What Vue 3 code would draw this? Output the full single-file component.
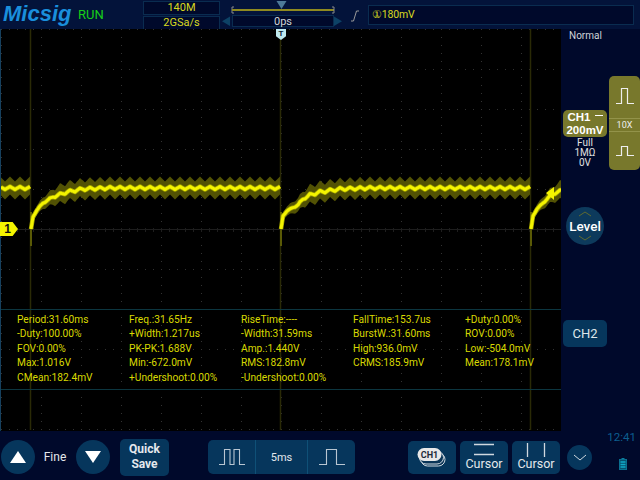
<template>
  <div class="scope">
    <header class="topbar">
      <div class="logo">Micsig</div>
      <div class="run">RUN</div>
      <div class="acq">
        <div class="acq-cell">140M</div>
        <div class="acq-cell">2GSa/s</div>
      </div>
      <div class="timeline">
        <svg class="timeline-svg" width="122" height="28" viewBox="0 0 122 28">
          <path d="M11 7V13M11 7H13M11 13H13" stroke="#8a8a8a" fill="none" />
          <rect x="11" y="9" width="102" height="2" fill="#8f8a20" />
          <path d="M111 7H113V13H111" stroke="#8a8a8a" fill="none" />
          <path d="M55.500 1H65.500L60.500 9Z" fill="#4d7a99" />
          <path d="M9 16.500V26L1 21.200Z" fill="#0d4266" />
          <path d="M113 16.500V26L121 21.200Z" fill="#0d4266" />
          <rect x="11.500" y="15.500" width="101" height="11" fill="#00092b" stroke="#0a2c50" />
          <text x="62" y="25" text-anchor="middle" class="tl-text">0ps</text>
        </svg>
      </div>
      <svg class="slope" width="10" height="12" viewBox="0 0 10 12">
        <path d="M1 11H3.500L6.500 1H9" stroke="#9a9a9a" fill="none" />
      </svg>
      <div class="trig-box">①180mV</div>
    </header>

    <div class="middle">
      <div class="screen">
        <svg class="wave" width="560" height="402" viewBox="1 29 560 402">
          <rect x="1" y="29" width="560" height="402" fill="#000" />
          <rect v-for="d in dots" :key="d.id" :x="d.x" :y="d.y" width="1" height="1" fill="#333" />
          <path :d="ticks" stroke="#1e1e1e" fill="none" />
          <path d="M30.500 29V430M280.500 29V430M530.500 29V430" stroke="#2a2a06" stroke-width="1.500" />
          <path d="M31 212V246M281 212V246M531 212V246" stroke="#5a5a06" stroke-width="2" />
          <path v-for="(e, i) in envelopes" :key="'e' + i" :d="e" fill="#525204" />
          <path v-for="(c, i) in cores" :key="'h' + i" :d="c" fill="none" stroke="#a3a300" stroke-width="4.500" stroke-linejoin="round" />
          <path v-for="(c, i) in cores" :key="'c' + i" :d="c" fill="none" stroke="#f4f400" stroke-width="3" stroke-linejoin="round" />
          <path d="M546 193L554 187V200Z" fill="#f4f400" />
        </svg>

        <div class="ch-marker">1</div>
        <div class="t-marker">T</div>

        <div class="measures">
          <div v-for="m in measures" :key="m" class="measure">{{ m }}</div>
        </div>
      </div>

      <aside class="side">
        <div class="mode">Normal</div>
        <div class="ch-row">
          <div class="ch-col">
            <div class="ch1">
              <span class="ch1-name">CH1 <i class="dash"></i></span>
              <span>200mV</span>
            </div>
            <div class="ch-info">Full<br />1MΩ<br />0V</div>
          </div>
          <div class="probe">
            <svg width="20" height="18" viewBox="0 0 20 18" class="probe-top">
              <path d="M1 16.500H6.500V1.500H12.500V16.500H19" stroke="#eee" stroke-width="1.200" fill="none" />
            </svg>
            <div class="probe-x">10X</div>
            <svg width="20" height="12" viewBox="0 0 20 12" class="probe-bottom">
              <path d="M1 10.500H6.500V1.500H12.500V10.500H19" stroke="#eee" stroke-width="1.200" fill="none" />
            </svg>
          </div>
        </div>
        <div class="level">
          <svg width="16" height="6" viewBox="0 0 16 6"><path d="M2 5L8 1L14 5" stroke="#5f6a30" fill="none" /></svg>
          <span>Level</span>
          <svg width="16" height="6" viewBox="0 0 16 6"><path d="M2 1L8 5L14 1" stroke="#5f6a30" fill="none" /></svg>
        </div>
        <div class="ch2">CH2</div>
      </aside>
    </div>

    <footer class="bottombar">
      <button class="round">
        <svg width="16" height="12" viewBox="0 0 16 12"><path d="M8 0L16 12H0Z" fill="#fff" /></svg>
      </button>
      <span class="fine">Fine</span>
      <button class="round">
        <svg width="16" height="12" viewBox="0 0 16 12"><path d="M0 0H16L8 12Z" fill="#fff" /></svg>
      </button>
      <button class="quick">Quick<br />Save</button>
      <div class="timebase">
        <div class="tb-cell">
          <svg width="26" height="18" viewBox="0 0 26 18"><path d="M0 16.500H5.500V1.500H11V16.500H15V1.500H20.500V16.500H26" stroke="#b9c6d2" stroke-width="1.100" fill="none" /></svg>
        </div>
        <div class="tb-cell tb-mid">5ms</div>
        <div class="tb-cell">
          <svg width="26" height="18" viewBox="0 0 26 18"><path d="M0 16.500H7.500V1.500H17.500V16.500H26" stroke="#b9c6d2" stroke-width="1.100" fill="none" /></svg>
        </div>
      </div>
      <button class="tool ch1-tool">
        <svg width="30" height="20" viewBox="0 0 30 20">
          <rect x="4" y="6" width="24" height="13" rx="6.500" fill="#0b3558" stroke="#cfd8df" />
          <rect x="2.500" y="4" width="24" height="13" rx="6.500" fill="#0b3558" stroke="#cfd8df" />
          <rect x="0.500" y="1" width="24" height="13" rx="6.500" fill="#e8e8e8" />
          <text x="12.500" y="11" text-anchor="middle" class="ch1-pill">CH1</text>
        </svg>
      </button>
      <button class="tool">
        <svg width="20" height="14" viewBox="0 0 20 14"><path d="M0 1.500H20M0 11.500H20" stroke="#cfd8df" stroke-width="1.300" /></svg>
        <span>Cursor</span>
      </button>
      <button class="tool">
        <svg width="20" height="14" viewBox="0 0 20 14"><path d="M1.500 0V14M18.500 0V14" stroke="#cfd8df" stroke-width="1.300" /></svg>
        <span>Cursor</span>
      </button>
      <button class="more">
        <svg width="14" height="7" viewBox="0 0 14 7"><path d="M1 1L7 6L13 1" stroke="#cfd8df" fill="none" /></svg>
      </button>
      <div class="status">
        <span class="clock">12:41</span>
        <svg width="8" height="12" viewBox="0 0 8 12" class="battery">
          <rect x="2.500" y="0" width="3" height="1" fill="#0a7fa0" />
          <rect x="0.500" y="1.500" width="7" height="10" fill="#06506e" stroke="#0a6f90" />
          <path d="M1.500 4H6.500M1.500 6.500H6.500M1.500 9H6.500" stroke="#11a9c9" stroke-width="1.500" />
        </svg>
      </div>
    </footer>
  </div>
</template>

<script setup>
const measures = [
  'Period:31.60ms', 'Freq.:31.65Hz', 'RiseTime:----', 'FallTime:153.7us', '+Duty:0.00%',
  '-Duty:100.00%', '+Width:1.217us', '-Width:31.59ms', 'BurstW.:31.60ms', 'ROV:0.00%',
  'FOV:0.00%', 'PK-PK:1.688V', 'Amp.:1.440V', 'High:936.0mV', 'Low:-504.0mV',
  'Max:1.016V', 'Min:-672.0mV', 'RMS:182.8mV', 'CRMS:185.9mV', 'Mean:178.1mV',
  'CMean:182.4mV', '+Undershoot:0.00%', '-Undershoot:0.00%'
]

// grid dots, 40px divisions with 8px sub steps
const dots = []
for (let x = 1; x <= 561; x += 40) {
  for (let y = 29; y <= 429; y += 8) dots.push({ id: x + '-' + y, x, y })
}
for (let y = 29; y <= 429; y += 40) {
  for (let x = 1; x <= 561; x += 8) dots.push({ id: 'h' + x + '-' + y, x, y })
}

let ticks = 'M1 229.5H561'
for (let x = 1; x <= 561; x += 8) ticks += `M${x + 0.5} 228V232`

// key points of each sweep of the signal
const sweeps = [
  [[1, 188], [30, 188]],
  [[31, 229], [33, 217], [37, 210], [43, 203], [53, 197], [67, 192], [83, 189], [110, 188], [280, 188]],
  [[281, 229], [283, 216], [287, 211], [292, 208], [298, 205], [303, 199], [310, 195], [320, 192], [340, 189], [370, 188], [530, 188]],
  [[531, 229], [533, 216], [537, 209], [543, 203], [548, 198], [555, 193], [561, 191]]
]

const lerp = (pts, x) => {
  for (let i = 1; i < pts.length; i++) {
    if (x <= pts[i][0]) {
      const t = (x - pts[i - 1][0]) / (pts[i][0] - pts[i - 1][0])
      return pts[i - 1][1] + (pts[i][1] - pts[i - 1][1]) * t
    }
  }
  return pts[pts.length - 1][1]
}

// triangle ripple, 10px period
const ripple = (x) => {
  const p = ((x % 10) + 10) % 10
  return p < 5 ? p / 5 - 0.5 : 1.5 - p / 5
}

const envelopes = []
const cores = []
for (const pts of sweeps) {
  const x0 = pts[0][0]
  const x1 = pts[pts.length - 1][0]
  const top = []
  const bot = []
  const mid = []
  for (let x = x0; x <= x1; x += 1) {
    const fade = Math.min(1, (x - x0 + (x0 === 1 ? 40 : 0)) / 30)
    const base = lerp(pts, x)
    const r = ripple(x) * 5 * fade
    const half = 3.5 + 5.5 * fade
    top.push(`${x} ${(base - half + r).toFixed(1)}`)
    bot.unshift(`${x} ${(base + half + r).toFixed(1)}`)
    mid.push(`${x} ${(base + ripple(x) * 3 * fade).toFixed(1)}`)
  }
  envelopes.push('M' + top.concat(bot).join('L') + 'Z')
  cores.push('M' + mid.join('L'))
}
</script>

<style scoped>
.scope {
  width: 640px;
  height: 480px;
  display: flex;
  flex-direction: column;
  background: #00092b;
  font-family: Roboto, "Liberation Sans", sans-serif;
  overflow: hidden;
}

.topbar {
  height: 29px;
  flex: none;
  display: flex;
  align-items: flex-start;
  background: #03133a;
  box-sizing: border-box;
}

.logo {
  width: 78px;
  padding: 1px 0 0 3px;
  box-sizing: border-box;
  font: italic bold 22px "Liberation Sans", sans-serif;
  color: #1a8fdc;
}

.run {
  width: 62px;
  padding-top: 7px;
  font-size: 13px;
  color: #17cf17;
}

.acq {
  width: 77px;
  margin: 1px 0 0 3px;
  flex: none;
}

.acq-cell {
  height: 12px;
  margin-bottom: 1px;
  border: 1px solid #0a2c50;
  background: #00092b;
  color: #d9d91f;
  font-size: 11px;
  line-height: 12px;
  text-align: center;
}

.timeline {
  width: 124px;
  height: 28px;
  flex: none;
}

.timeline-svg {
  display: block;
  margin-left: 1px;
}

.tl-text {
  font-size: 11px;
  fill: #d0d4d8;
  font-family: Roboto, sans-serif;
}

.slope {
  margin: 10px 0 0 6px;
}

.trig-box {
  width: 266px;
  height: 20px;
  margin: 5px 0 0 8px;
  padding-left: 3px;
  box-sizing: border-box;
  border: 1px solid #0a2c50;
  background: #00092b;
  color: #d9d91f;
  font-size: 10.500px;
  letter-spacing: -0.200px;
  line-height: 18px;
}

.middle {
  height: 405px;
  display: flex;
  flex: none;
}

.screen {
  position: relative;
  width: 561px;
  height: 402px;
  flex: none;
  box-sizing: border-box;
  border-left: 1px solid #16405e;
  border-right: 1px solid #0d3a4a;
  border-bottom: 1px solid #0d3a4a;
}

.wave {
  display: block;
}

.ch-marker {
  position: absolute;
  left: -1px;
  top: 193px;
  width: 18px;
  height: 14px;
  background: #f4f400;
  clip-path: polygon(0 0, 70% 0, 100% 50%, 70% 100%, 0 100%);
  color: #111;
  font: bold 12px/14px "Liberation Sans", sans-serif;
  text-align: center;
  padding-right: 3px;
  box-sizing: border-box;
}

.t-marker {
  position: absolute;
  left: 275px;
  top: 0;
  width: 10px;
  height: 11px;
  background: #bfe9ef;
  clip-path: polygon(0 0, 100% 0, 100% 65%, 50% 100%, 0 65%);
  color: #123;
  font: bold 8px/9px "Liberation Sans", sans-serif;
  text-align: center;
}

.measures {
  position: absolute;
  left: 0;
  top: 280px;
  width: 560px;
  height: 81px;
  box-sizing: border-box;
  padding: 3px 0 0 16px;
  border-top: 1px solid #0c3640;
  border-bottom: 1px solid #0c3640;
  display: grid;
  grid-template-columns: repeat(5, 112px);
  grid-auto-rows: 14.400px;
  color: #d9d900;
  font-size: 10.200px;
  line-height: 14.400px;
  white-space: nowrap;
}

.side {
  width: 79px;
  flex: none;
  padding-left: 2px;
  box-sizing: border-box;
  color: #e8e8e8;
}

.mode {
  height: 47px;
  padding-left: 6px;
  font-size: 10px;
  line-height: 13px;
  color: #cfd3d8;
}

.ch-row {
  display: flex;
  height: 94px;
}

.ch-col {
  width: 45px;
  padding-top: 34px;
  flex: none;
}

.ch1 {
  width: 44px;
  height: 27px;
  display: flex;
  flex-direction: column;
  align-items: center;
  background: #78782c;
  border-radius: 5px;
  color: #fff;
  font: bold 11.500px/12.500px "Liberation Sans", sans-serif;
  padding-top: 1px;
  box-sizing: border-box;
}

.ch1-name {
  display: flex;
  align-items: center;
  gap: 4px;
}

.dash {
  display: block;
  width: 8px;
  height: 1px;
  background: #fff;
  margin-bottom: 4px;
}

.ch-info {
  width: 44px;
  margin-top: 1px;
  text-align: center;
  font-size: 10px;
  line-height: 10px;
  color: #e0e0e0;
}

.probe {
  width: 31px;
  height: 94px;
  margin-left: 1px;
  background: #78782c;
  border-radius: 5px;
  display: flex;
  flex-direction: column;
  align-items: center;
  box-sizing: border-box;
  padding-top: 11px;
}

.probe-x {
  width: 100%;
  height: 12px;
  margin-top: 13px;
  border-top: 1px solid #93934a;
  border-bottom: 1px solid #93934a;
  color: #eee;
  font-size: 9px;
  line-height: 12px;
  text-align: center;
}

.probe-bottom {
  margin-top: 13px;
}

.level {
  width: 38px;
  height: 38px;
  margin: 37px 0 0 3px;
  border-radius: 50%;
  background: #0d3a5c;
  display: flex;
  flex-direction: column;
  align-items: center;
  justify-content: center;
  gap: 2px;
  font: 500 13.500px/14px Roboto, sans-serif;
  color: #fff;
}

.level svg {
  display: block;
}

.ch2 {
  width: 44px;
  height: 27px;
  margin-top: 75px;
  border-radius: 5px;
  background: #06365c;
  color: #dfe6ea;
  font-size: 13px;
  line-height: 27px;
  text-align: center;
}

.bottombar {
  height: 46px;
  flex: none;
  display: flex;
  align-items: center;
  color: #e4e8ec;
}

button {
  border: none;
  padding: 0;
  font-family: inherit;
  color: inherit;
  background: #06365c;
}

.round {
  width: 34px;
  height: 34px;
  margin-left: 1px;
  border-radius: 50%;
  display: flex;
  align-items: center;
  justify-content: center;
}

.fine {
  width: 40px;
  text-align: center;
  font-size: 12px;
}

.quick {
  width: 49px;
  height: 37px;
  margin-left: 10px;
  border-radius: 5px;
  font-weight: bold;
  font-size: 12px;
  line-height: 15px;
}

.timebase {
  display: flex;
  width: 147px;
  height: 34px;
  margin-left: 39px;
  background: #06365c;
  border-radius: 5px;
}

.tb-cell {
  flex: 1;
  display: flex;
  align-items: center;
  justify-content: center;
}

.tb-mid {
  flex: none;
  width: 51px;
  border-left: 1px solid #0f5077;
  border-right: 1px solid #0f5077;
  font-size: 11px;
}

.tool {
  width: 48px;
  height: 33px;
  margin-left: 4px;
  border-radius: 5px;
  display: flex;
  flex-direction: column;
  align-items: center;
  justify-content: center;
  font-size: 12.500px;
  line-height: 14px;
}

.ch1-tool {
  margin-left: 53px;
}

.ch1-pill {
  font: bold 9px Roboto, sans-serif;
  fill: #1c2a38;
}

.more {
  width: 25px;
  height: 25px;
  margin-left: 7px;
  border-radius: 50%;
  display: flex;
  align-items: center;
  justify-content: center;
}

.status {
  width: 48px;
  align-self: flex-start;
  margin-top: -4px;
  display: flex;
  flex-direction: column;
  align-items: flex-end;
  padding-right: 4px;
  box-sizing: border-box;
}

.clock {
  color: #0d5e8f;
  font-size: 11.500px;
  line-height: 14px;
  margin-bottom: 14px;
}

.battery {
  margin-right: 9px;
}
</style>
